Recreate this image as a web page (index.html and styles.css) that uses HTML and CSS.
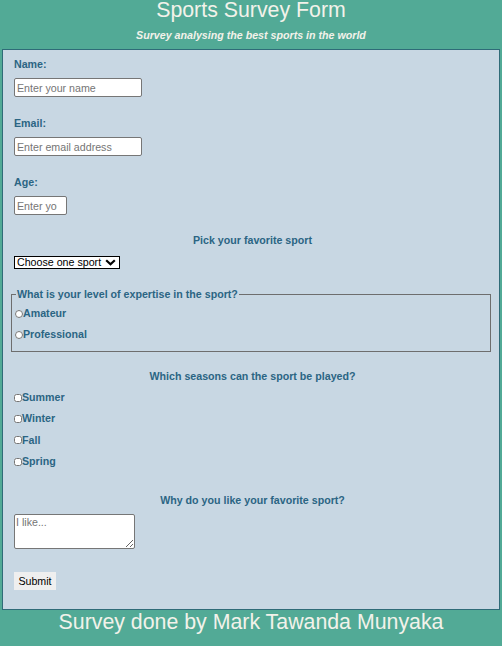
FILE: index.html
```html
<!DOCTYPE html>
<html lang="en">
<head>
<meta charset="utf-8">
<title>Sports Survey Form</title>
<link rel="stylesheet" href="styles.css">
</head>
<body>
<header class="top">
  <h1 class="title">Sports Survey Form</h1>
  <p class="subtitle">Survey analysing the best sports in the world</p>
</header>
<form class="survey">
  <div class="field">
    <label class="lbl" for="name">Name:</label>
    <input class="txt" id="name" type="text" placeholder="Enter your name">
  </div>
  <div class="field">
    <label class="lbl" for="email">Email:</label>
    <input class="txt" id="email" type="email" placeholder="Enter email address">
  </div>
  <div class="field">
    <label class="lbl" for="age">Age:</label>
    <input class="txt age" id="age" type="text" placeholder="Enter your age">
  </div>
  <p class="question q-sport">Pick your favorite sport</p>
  <span class="select-wrap">
    <select class="sport">
      <option>Choose one sport</option>
    </select>
    <svg class="chev" width="11" height="7" viewBox="0 0 11 7" aria-hidden="true"><polyline points="1.2,1.2 5.5,5.3 9.8,1.2" fill="none" stroke="#000" stroke-width="2.2"/></svg>
  </span>
  <fieldset class="level">
    <legend class="legend">What is your level of expertise in the sport?</legend>
    <label class="opt"><input class="radio" type="radio" name="lvl">Amateur</label>
    <label class="opt"><input class="radio" type="radio" name="lvl">Professional</label>
  </fieldset>
  <p class="question q-season">Which seasons can the sport be played?</p>
  <div class="checks">
    <label class="opt"><input class="check" type="checkbox">Summer</label>
    <label class="opt"><input class="check" type="checkbox">Winter</label>
    <label class="opt"><input class="check" type="checkbox">Fall</label>
    <label class="opt"><input class="check" type="checkbox">Spring</label>
  </div>
  <p class="question q-why">Why do you like your favorite sport?</p>
  <textarea class="why" placeholder="I like..."></textarea>
  <button class="submit" type="submit">Submit</button>
</form>
<footer class="foot">Survey done by Mark Tawanda Munyaka</footer>
</body>
</html>
```

FILE: styles.css
```css
html, body {
  margin: 0;
  padding: 0;
}
body {
  background: #52aa96;
  font-family: "Liberation Sans", Arial, sans-serif;
  color: #2b6583;
}
.top {
  text-align: center;
  color: #f2f2ea;
}
.title {
  margin: 0;
  font-size: 21.33px;
  font-weight: normal;
  line-height: 20px;
}
.subtitle {
  margin: 9px 0 0;
  font-size: 10.67px;
  font-weight: bold;
  font-style: italic;
  line-height: 13px;
  height: 20px;
}
.survey {
  margin: 0 2px;
  border: 1px solid #2f6b78;
  background: #c8d7e3;
  padding: 8px 8px 19px 11px;
  display: flex;
  flex-direction: column;
  align-items: flex-start;
  font-size: 10.67px;
  font-weight: bold;
  line-height: 13px;
}
.field {
  display: flex;
  flex-direction: column;
  align-items: flex-start;
  gap: 7px;
  margin-bottom: 20px;
}
.lbl {
  display: block;
}
.txt {
  box-sizing: border-box;
  width: 128px;
  height: 19px;
  margin: 0;
  padding: 1px 2px;
  border: 1px solid #767676;
  border-radius: 2px;
  background: #fff;
  font-family: "Liberation Sans", Arial, sans-serif;
  font-size: 10.67px;
  font-weight: normal;
  color: #000;
}
.txt::placeholder, .why::placeholder {
  color: #757575;
}
.age {
  width: 53px;
  padding-right: 9px;
}
.question {
  align-self: stretch;
  text-align: center;
  margin: 0;
}
.q-sport {
  margin-top: -1px;
  margin-bottom: 9px;
}
.select-wrap {
  position: relative;
  display: block;
  height: 13px;
}
.sport {
  -webkit-appearance: none;
  appearance: none;
  display: block;
  box-sizing: border-box;
  height: 13px;
  width: 106px;
  margin: 0;
  padding: 0 0 0 2px;
  border: 1px solid #000;
  border-radius: 0;
  background: #fff;
  font-family: "Liberation Sans", Arial, sans-serif;
  font-size: 10.67px;
  line-height: 11px;
  font-weight: normal;
  color: #000;
}
.chev {
  position: absolute;
  right: 4px;
  top: 3px;
  pointer-events: none;
}
.level {
  align-self: stretch;
  margin: 19px 0 0 -3px;
  padding: 0 0 10px 3px;
  border: 1px solid #6e6e6e;
  display: flex;
  flex-direction: column;
  gap: 8px;
}
.legend {
  padding: 0 1px;
  margin-left: 1px;
}
.opt {
  display: flex;
  align-items: center;
  height: 13px;
}
.level .opt:first-of-type {
  margin-top: 6px;
}
.radio {
  width: 8px;
  height: 8px;
  margin: 0;
}
.check {
  width: 8px;
  height: 8px;
  margin: 0;
}
.q-season {
  margin-top: 18px;
}
.checks {
  display: flex;
  flex-direction: column;
  gap: 8.4px;
  margin-top: 8px;
}
.q-why {
  margin-top: 26px;
  margin-bottom: 7px;
}
.why {
  box-sizing: border-box;
  width: 121px;
  height: 35px;
  margin: 0;
  padding: 1px;
  border: 1px solid #767676;
  border-radius: 2px;
  background: #fff;
  font-family: "Liberation Sans", Arial, sans-serif;
  font-size: 10.67px;
  color: #000;
  resize: both;
}
.submit {
  margin-top: 23px;
  box-sizing: border-box;
  width: 42px;
  height: 18px;
  padding: 0;
  border: none;
  background: #efefef;
  font-family: "Liberation Sans", Arial, sans-serif;
  font-size: 10.67px;
  color: #000;
}
.foot {
  text-align: center;
  color: #f2f2ea;
  font-size: 21.33px;
  line-height: 24px;
}
```
